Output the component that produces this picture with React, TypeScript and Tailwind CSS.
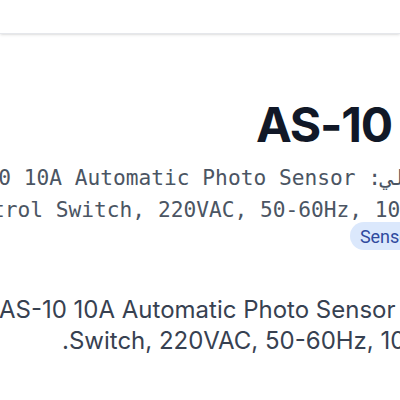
import React from "react";

const tags = ["Sensors"];

export default function App() {
  return (
    <div className="w-[400px] h-[400px] overflow-hidden bg-white font-['Inter','Noto_Sans',sans-serif]">
      <header className="h-[34px] bg-white border-b border-gray-200 shadow-sm" />

      <main dir="rtl" className="pt-[67px]">
        <h1 className="pr-[8px] text-[48px] leading-none font-bold tracking-tight text-[#111827]">
          AS-10
        </h1>

        <div className="mt-[13px] -ml-[80px] -mr-[32px] whitespace-nowrap font-['DejaVu_Sans_Mono','DejaVu_Sans',monospace] text-[21.2px] leading-[31.5px] text-[#4b5563]">
          <p>أصلي: AS-10 10A Automatic Photo Sensor</p>
          <p className="pr-[19px]">Control Switch, 220VAC, 50-60Hz, 10A</p>
        </div>

        <div className="-mt-[3px] -mr-[35px] flex gap-2">
          {tags.map((t) => (
            <span
              key={t}
              className="rounded-full bg-[#dbe8fc] px-[10px] h-[28px] flex items-center text-[18px] text-[#2f4a9e] font-['Roboto',sans-serif]"
            >
              {t}
            </span>
          ))}
        </div>

        <p className="mt-[44px] -ml-[30px] -mr-[114px] text-center text-[24px] leading-[31px] text-[#374151]">
          AS-10 10A Automatic Photo Sensor Control
          <br />
          Switch, 220VAC, 50-60Hz, 10A.
        </p>
      </main>
    </div>
  );
}
